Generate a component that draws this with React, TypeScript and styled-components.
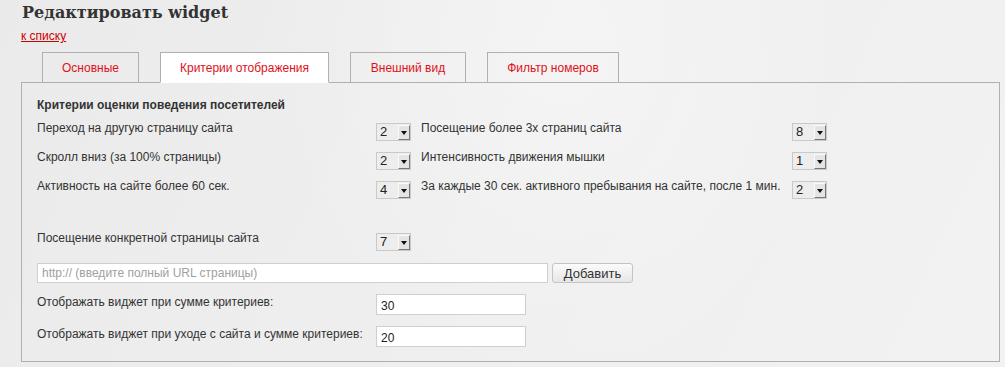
import React from "react";
import styled, { createGlobalStyle } from "styled-components";

const Global = createGlobalStyle`
  html, body { margin: 0; padding: 0; }
  body {
    width: 1005px;
    height: 367px;
    overflow: hidden;
    font-family: "Liberation Sans", Arial, sans-serif;
    font-size: 12px;
    color: #333;
    background-color: #eeeeee;
    background-image:
      radial-gradient(ellipse 420px 520px at 560px 40px, rgba(255,255,255,0.35), rgba(255,255,255,0) 70%),
      linear-gradient(115deg, rgba(0,0,0,0.015) 0%, rgba(255,255,255,0) 40%, rgba(255,255,255,0.25) 100%);
  }
`;

const Page = styled.div`
  padding: 3px 5px 0 21px;
`;

const Title = styled.h1`
  margin: 0;
  font-family: "DejaVu Serif", "Liberation Serif", serif;
  font-weight: bold;
  font-size: 16px;
  line-height: 20px;
  color: #333;
  padding-left: 1px;
`;

const BackLink = styled.a`
  display: inline-block;
  margin-top: 6px;
  color: #cc0000;
  text-decoration: underline;
  font-size: 12px;
  line-height: 14px;
`;

const TabBar = styled.div`
  display: flex;
  gap: 21px;
  margin-top: 9px;
  padding-left: 21px;
  position: relative;
  z-index: 1;
`;

const Tab = styled.div<{ $active?: boolean; $w: number }>`
  width: ${(p) => p.$w}px;
  box-sizing: border-box;
  display: flex;
  align-items: center;
  justify-content: center;
  border: 1px solid #b0b0b0;
  border-bottom: ${(p) => (p.$active ? "1px solid #fff" : "none")};
  background: ${(p) => (p.$active ? "#ffffff" : "transparent")};
  color: #e0101a;
  font-size: 12px;
  height: ${(p) => (p.$active ? "31px" : "30px")};
  margin-bottom: ${(p) => (p.$active ? "-1px" : "0")};
`;

const Panel = styled.div`
  width: 979px;
  height: 280px;
  box-sizing: border-box;
  border: 1px solid #b0b0b0;
  padding: 15px 15px 0 15px;
`;

const SectionTitle = styled.div`
  font-weight: bold;
  font-size: 12px;
  line-height: 14px;
  color: #333;
  margin-bottom: 9px;
`;

const Grid = styled.div`
  display: grid;
  grid-template-columns: 339px 45px 371px 45px;
  row-gap: 9px;
  align-items: start;
`;

const Label = styled.div`
  font-size: 12px;
  line-height: 14px;
  color: #333;
  white-space: nowrap;
`;

const SelectWrap = styled.div`
  width: 35px;
  height: 18px;
  box-sizing: border-box;
  border: 1px solid #c9c9c9;
  background: #ededed;
  display: flex;
  align-items: stretch;
  margin-top: 2px;
`;

const SelectValue = styled.span`
  flex: 1;
  font-size: 13px;
  line-height: 16px;
  padding-left: 3px;
  color: #222;
`;

const SelectButton = styled.span`
  width: 12px;
  box-sizing: border-box;
  margin: 1px 0 0 0;
  border-top: 1px solid #fafafa;
  border-left: 1px solid #fafafa;
  border-right: 1px solid #777;
  border-bottom: 1px solid #777;
  background: #e4e4e4;
  display: flex;
  align-items: center;
  justify-content: center;
`;

const Arrow = styled.span`
  width: 0;
  height: 0;
  border-left: 3px solid transparent;
  border-right: 3px solid transparent;
  border-top: 4px solid #111;
  margin-top: 1px;
`;

const Select = ({ value }: { value: string }) => (
  <SelectWrap>
    <SelectValue>{value}</SelectValue>
    <SelectButton>
      <Arrow />
    </SelectButton>
  </SelectWrap>
);

const SinglePageRow = styled.div`
  display: grid;
  grid-template-columns: 339px 45px;
  margin-top: 32px;
  align-items: start;
`;

const UrlRow = styled.div`
  display: flex;
  gap: 4px;
  margin-top: 12px;
`;

const UrlInput = styled.input`
  width: 511px;
  height: 20px;
  box-sizing: border-box;
  border: 1px solid #cfcfcf;
  background: #fff;
  font-family: "Liberation Sans", Arial, sans-serif;
  font-size: 12px;
  padding: 0 4px;
  color: #333;
  outline: none;
  &::placeholder { color: #a0a0a0; }
`;

const AddButton = styled.button`
  width: 81px;
  height: 20px;
  box-sizing: border-box;
  border: 1px solid #c4c4c4;
  border-radius: 3px;
  background: linear-gradient(#fbfbfb, #e6e6e6);
  font-family: "Liberation Sans", Arial, sans-serif;
  font-size: 13px;
  color: #333;
  padding: 0;
`;

const SumRow = styled.div<{ $top: number }>`
  display: grid;
  grid-template-columns: 339px 150px;
  margin-top: ${(p) => p.$top}px;
  align-items: start;
`;

const SumInput = styled.input`
  width: 150px;
  height: 21px;
  box-sizing: border-box;
  border: 1px solid #cfcfcf;
  background: #fff;
  font-family: "Liberation Sans", Arial, sans-serif;
  font-size: 12px;
  padding: 3px 4px 0;
  color: #222;
  outline: none;
`;

const SumLabel = styled(Label)`
  padding-top: 1px;
`;

const rows: [string, string, string, string][] = [
  ["Переход на другую страницу сайта", "2", "Посещение более 3х страниц сайта", "8"],
  ["Скролл вниз (за 100% страницы)", "2", "Интенсивность движения мышки", "1"],
  ["Активность на сайте более 60 сек.", "4", "За каждые 30 сек. активного пребывания на сайте, после 1 мин.", "2"],
];

const tabs: { title: string; w: number; active?: boolean }[] = [
  { title: "Основные", w: 97 },
  { title: "Критерии отображения", w: 169, active: true },
  { title: "Внешний вид", w: 116 },
  { title: "Фильтр номеров", w: 132 },
];

export default function App() {
  return (
    <>
      <Global />
      <Page>
        <Title>Редактировать widget</Title>
        <BackLink href="#">к списку</BackLink>
        <TabBar>
          {tabs.map((t) => (
            <Tab key={t.title} $active={t.active} $w={t.w}>
              {t.title}
            </Tab>
          ))}
        </TabBar>
        <Panel>
          <SectionTitle>Критерии оценки поведения посетителей</SectionTitle>
          <Grid>
            {rows.map((r) => (
              <React.Fragment key={r[0]}>
                <Label>{r[0]}</Label>
                <Select value={r[1]} />
                <Label>{r[2]}</Label>
                <Select value={r[3]} />
              </React.Fragment>
            ))}
          </Grid>
          <SinglePageRow>
            <Label>Посещение конкретной страницы сайта</Label>
            <Select value="7" />
          </SinglePageRow>
          <UrlRow>
            <UrlInput placeholder="http:// (введите полный URL страницы)" />
            <AddButton>Добавить</AddButton>
          </UrlRow>
          <SumRow $top={11}>
            <SumLabel>Отображать виджет при сумме критериев:</SumLabel>
            <SumInput defaultValue="30" />
          </SumRow>
          <SumRow $top={11}>
            <SumLabel>Отображать виджет при уходе с сайта и сумме критериев:</SumLabel>
            <SumInput defaultValue="20" />
          </SumRow>
        </Panel>
      </Page>
    </>
  );
}
